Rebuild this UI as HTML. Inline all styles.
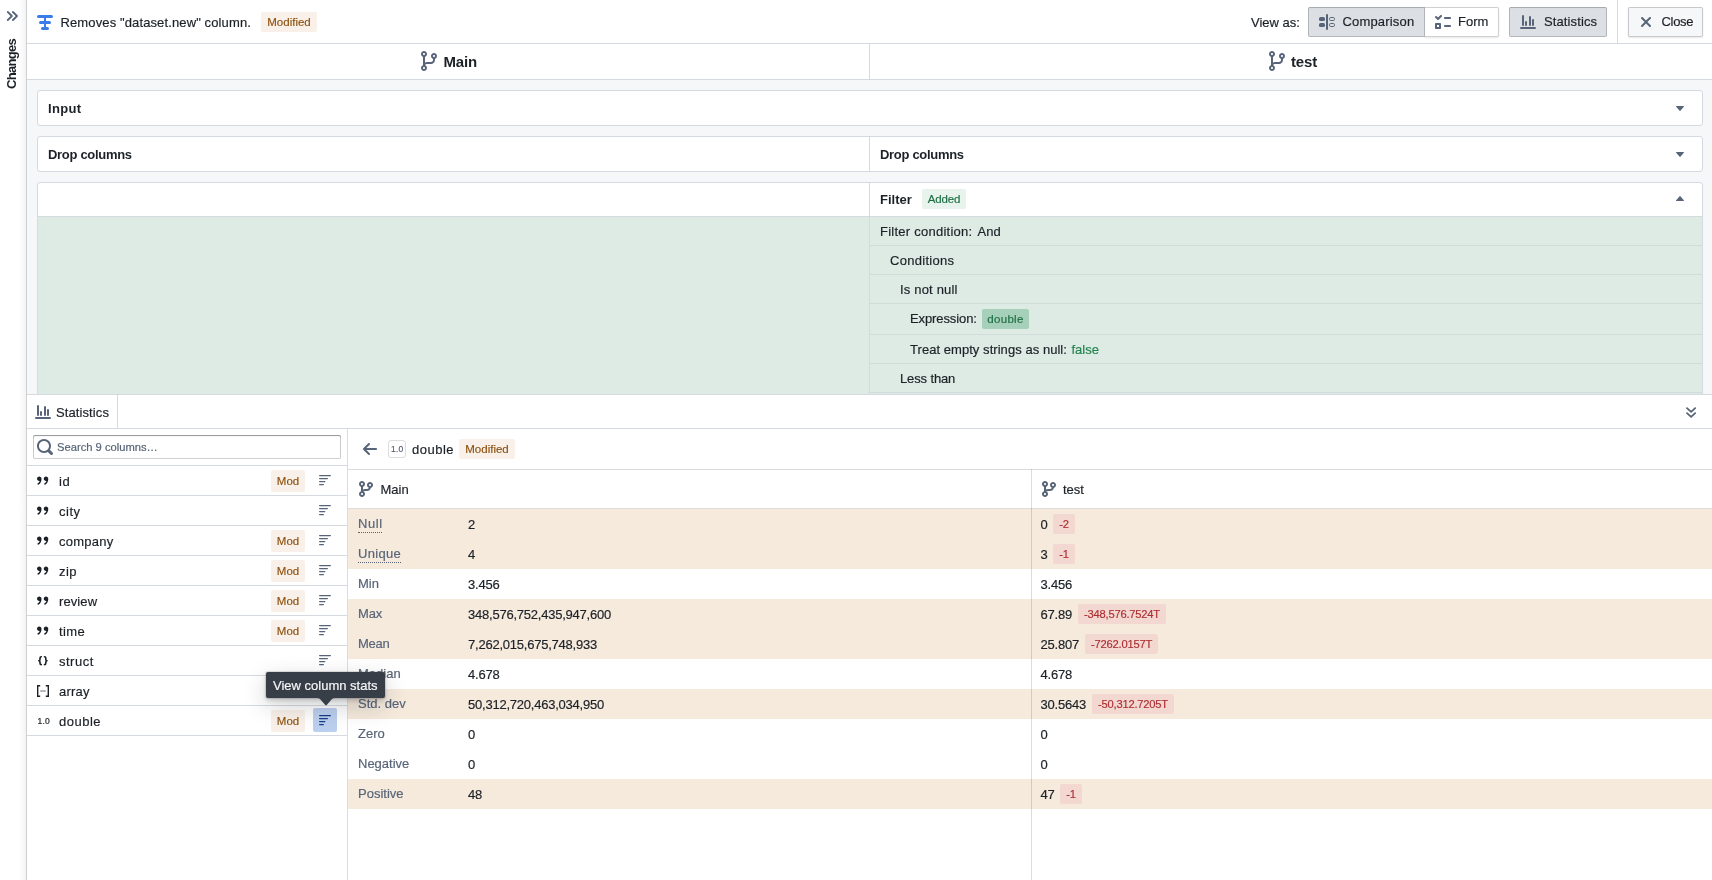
<!DOCTYPE html>
<html lang="en">
<head>
<meta charset="utf-8">
<title>Changes</title>
<style>
*{box-sizing:border-box;margin:0;padding:0}
html,body{width:1712px;height:880px;overflow:hidden;background:#fff}
body{font-family:"Liberation Sans",sans-serif;font-size:13px;color:#1c2127;-webkit-font-smoothing:antialiased}
#app{position:relative;width:1712px;height:880px;overflow:hidden;background:#fff;will-change:transform;transform:translateZ(0)}
.abs{position:absolute}
.t{position:absolute;white-space:nowrap;line-height:16px;height:16px;-webkit-text-stroke:.18px currentColor}
.b{font-weight:bold;-webkit-text-stroke:0 transparent}
svg{position:absolute;display:block;overflow:visible}
.ic{fill:#586578}
/* rail */
#rail{left:0;top:0;width:26px;height:880px;background:linear-gradient(to right,#fff 0,#fff 17px,#fcfcfc 21px,#f3f3f4 26px)}
#main{left:26px;top:0;width:1686px;height:880px;background:#f6f7f9;border-left:1px solid #cfd0d2}
#hdr{left:27px;top:0;width:1685px;height:44px;background:#fff;border-bottom:1px solid #d5d9e0}
#brow{left:27px;top:44px;width:1685px;height:36px;background:#fff;border-bottom:1px solid #d5d9e0}
.tag{position:absolute;border-radius:2px;height:20px;line-height:20px;font-size:11.5px;text-align:center;white-space:nowrap;-webkit-text-stroke:.15px currentColor}
.tag.mod{background:#f9f1e9;color:#8c500e}
.tag.add{background:#e9f3ee;color:#1c6e42}
.tag.red{background:#f3d7d1;color:#ac2f33;font-size:11.2px;letter-spacing:-.22px}
.btn{position:absolute;top:7px;height:30px;background:#f6f7f9;box-shadow:inset 0 0 0 1px rgba(17,20,24,.2),0 1px 2px rgba(17,20,24,.1);border-radius:2px}
.btn.on{background:#dce0e5;box-shadow:inset 0 0 0 1px rgba(17,20,24,.2),inset 0 1px 1px rgba(17,20,24,.08)}
.card{position:absolute;left:37px;width:1666px;background:#fff;border:1px solid #d5d9e0;border-radius:3px}
.vline{position:absolute;width:1px;background:#d5d9e0}
.hline{position:absolute;height:1px;background:#d5d9e0}
.hline.g{background:#d0dbda}
.hline.n,.vline.n{background:rgba(17,20,24,.15)}
.lab{color:#586578}
.lab.ul{border-bottom:1px dotted #586578;height:17px;overflow:hidden}
.num{letter-spacing:-.23px}
.tyi{color:#1c2127}
</style>
</head>
<body>
<div id="app">
  <!-- main background -->
  <div id="main" class="abs"></div>
  <div id="rail" class="abs"></div>

  <!-- header -->
  <div id="hdr" class="abs"></div>
  <div id="brow" class="abs"></div>

  <!-- rail content -->
  <svg style="left:0;top:0" width="26" height="32" viewBox="0 0 26 32" fill="none" stroke="#586578" stroke-width="1.800" stroke-linecap="round" stroke-linejoin="round"><path d="M7.800 12L11.900 16 7.800 20M12.900 12L17 16l-4.100 4"/></svg>
  <div id="chg" class="t b" style="left:16px;top:89.3px;font-size:13px;letter-spacing:-.7px;transform-origin:0 0;transform:rotate(-90deg) translateY(-12px)">Changes</div>

  <!-- header content -->
  <svg style="left:37px;top:14px" width="16" height="16" viewBox="0 0 16 16" fill="#3a7ce8"><rect x="0" y="1" width="16" height="3" rx="1.5"/><rect x="2" y="7" width="12" height="3" rx="1.5"/><rect x="4" y="13" width="8" height="3" rx="1.5"/><rect x="7" y="2" width="2" height="13"/></svg>
  <div id="title" class="t" style="left:60.5px;top:15px;letter-spacing:0.12px">Removes "dataset.new" column.</div>
  <div class="tag mod" style="left:261px;top:12px;width:56px"><span id="tmod1">Modified</span></div>

  <div id="viewas" class="t" style="left:1251px;top:15px">View as:</div>
  <div class="btn" style="left:1424px;width:75px;border-radius:0 2px 2px 0;background:#fff"></div>
  <div class="btn on" style="left:1308px;width:117px;border-radius:2px 0 0 2px"></div>
  <div class="btn on" style="left:1509px;width:98px"></div>
  <div class="btn" style="left:1628px;width:75px"></div>
  <div class="vline" style="left:1617px;top:0;height:43px"></div>

  <svg class="ic" style="left:1319px;top:14px" width="16" height="16" viewBox="0 0 16 16"><rect x="0" y="3" width="6" height="4" rx="1.6"/><rect x="0" y="9" width="6" height="4" rx="1.6"/><rect x="7" y="0" width="2" height="16" rx="1"/><rect x="10.5" y="3.5" width="5" height="3" rx="1.2" fill="none" stroke="#586578"/><rect x="10.5" y="9.5" width="5" height="3" rx="1.2" fill="none" stroke="#586578"/></svg>
  <div id="bcomp" class="t" style="left:1342.5px;top:14px;letter-spacing:0.17px">Comparison</div>
  <svg class="ic" style="left:1435px;top:14px" width="16" height="16" viewBox="0 0 16 16"><path fill-rule="evenodd" d="M2 11v2h2v-2H2zM1 9h4c.55 0 1 .45 1 1v4c0 .55-.45 1-1 1H1c-.55 0-1-.45-1-1v-4c0-.55.45-1 1-1zm9-6h5c.55 0 1 .45 1 1s-.45 1-1 1h-5c-.55 0-1-.45-1-1s.45-1 1-1zM6 1c.55 0 1 .45 1 1 0 .28-.11.53-.29.71l-3 3C3.530 5.890 3.280 6 3 6s-.53-.11-.71-.29l-2-2A1.003 1.003 0 011.710 2.290L3 3.590 5.290 1.300C5.470 1.110 5.720 1 6 1zm4 10h5c.55 0 1 .45 1 1s-.45 1-1 1h-5c-.55 0-1-.45-1-1s.45-1 1-1z"/></svg>
  <div id="bform" class="t" style="left:1458px;top:14px">Form</div>
  <svg class="ic" style="left:1520px;top:14px" width="16" height="16" viewBox="0 0 16 16"><rect x="0" y="13" width="16" height="2" rx="1"/><rect x="2" y="1" width="2" height="11" rx="1"/><rect x="5" y="7" width="2" height="5" rx="1"/><rect x="9" y="2" width="2" height="10" rx="1"/><rect x="12" y="5" width="2" height="7" rx="1"/></svg>
  <div id="bstat" class="t" style="left:1544px;top:14px;letter-spacing:0.12px">Statistics</div>
  <svg class="ic" style="left:1638px;top:14px" width="16" height="16" viewBox="0 0 16 16"><path d="M9.41 8l3.29-3.29c.19-.18.3-.43.3-.71a1.003 1.003 0 00-1.710-.71L8 6.590l-3.290-3.300a1.003 1.003 0 00-1.420 1.420L6.590 8 3.300 11.290c-.19.18-.3.43-.3.71a1.003 1.003 0 001.710.71L8 9.410l3.290 3.290c.18.19.43.3.71.3a1.003 1.003 0 00.71-1.710L9.410 8z"/></svg>
  <div id="bclose" class="t" style="left:1661.5px;top:14px;letter-spacing:-0.3px">Close</div>

  <!-- branch row -->
  <div class="vline" style="left:869px;top:44px;height:35px"></div>
  <svg class="ic" style="left:419px;top:51px" width="20" height="20" viewBox="0 0 20 20"><path fill-rule="evenodd" d="M15 2c-1.660 0-3 1.340-3 3 0 1.300.84 2.400 2 2.820V9c0 1.100-.9 2-2 2H8c-.73 0-1.410.21-2 .55V5.820C7.160 5.400 8 4.300 8 3c0-1.660-1.340-3-3-3S2 1.340 2 3c0 1.300.84 2.400 2 2.820v8.370C2.840 14.600 2 15.700 2 17c0 1.660 1.340 3 3 3s3-1.340 3-3c0-1.250-.77-2.300-1.850-2.750C6.450 13.520 7.160 13 8 13h4c2.210 0 4-1.790 4-4V7.820C17.160 7.400 18 6.300 18 5c0-1.660-1.340-3-3-3zM5 2c.55 0 1 .45 1 1s-.45 1-1 1-1-.45-1-1 .45-1 1-1zm0 16c-.55 0-1-.45-1-1s.45-1 1-1 1 .45 1 1-.45 1-1 1zM15 6c-.55 0-1-.45-1-1s.45-1 1-1 1 .45 1 1-.45 1-1 1z"/></svg>
  <div id="hmain" class="t b" style="left:443.5px;top:53px;font-size:15px;line-height:18px;height:18px;letter-spacing:-0.2px">Main</div>
  <svg class="ic" style="left:1267px;top:51px" width="20" height="20" viewBox="0 0 20 20"><path fill-rule="evenodd" d="M15 2c-1.660 0-3 1.340-3 3 0 1.300.84 2.400 2 2.820V9c0 1.100-.9 2-2 2H8c-.73 0-1.410.21-2 .55V5.820C7.160 5.400 8 4.300 8 3c0-1.660-1.340-3-3-3S2 1.340 2 3c0 1.300.84 2.400 2 2.820v8.370C2.840 14.600 2 15.700 2 17c0 1.660 1.340 3 3 3s3-1.340 3-3c0-1.250-.77-2.300-1.850-2.750C6.450 13.520 7.160 13 8 13h4c2.210 0 4-1.790 4-4V7.820C17.160 7.400 18 6.300 18 5c0-1.660-1.340-3-3-3zM5 2c.55 0 1 .45 1 1s-.45 1-1 1-1-.45-1-1 .45-1 1-1zm0 16c-.55 0-1-.45-1-1s.45-1 1-1 1 .45 1 1-.45 1-1 1zM15 6c-.55 0-1-.45-1-1s.45-1 1-1 1 .45 1 1-.45 1-1 1z"/></svg>
  <div id="htest" class="t b" style="left:1291px;top:53px;font-size:15px;line-height:18px;height:18px;letter-spacing:-0.15px">test</div>
  <!-- /PART1 -->
  <!-- cards -->
  <div class="card" style="top:90px;height:36px"></div>
  <div id="cinput" class="t b" style="left:48px;top:101px;letter-spacing:0.3px">Input</div>
  <svg class="ic" style="left:1672px;top:100px" width="16" height="16" viewBox="0 0 16 16"><path d="M12 6.500c0-.28-.22-.5-.5-.5h-7a.495.495 0 00-.37.83l3.500 4c.9.1.22.17.37.17s.28-.7.37-.17l3.500-4c.08-.9.13-.2.13-.33z"/></svg>

  <div class="card" style="top:136px;height:36px"></div>
  <div class="vline" style="left:869px;top:137px;height:34px"></div>
  <div id="cdrop1" class="t b" style="left:48px;top:147px;letter-spacing:-0.3px">Drop columns</div>
  <div id="cdrop2" class="t b" style="left:880px;top:147px;letter-spacing:-0.3px">Drop columns</div>
  <svg class="ic" style="left:1672px;top:146px" width="16" height="16" viewBox="0 0 16 16"><path d="M12 6.500c0-.28-.22-.5-.5-.5h-7a.495.495 0 00-.37.83l3.500 4c.9.1.22.17.37.17s.28-.7.37-.17l3.500-4c.08-.9.13-.2.13-.33z"/></svg>

  <div class="card" style="top:182px;height:230px;border-radius:3px 3px 0 0"></div>
  <div class="abs" style="left:38px;top:217px;width:1664px;height:177px;background:#deebe4"></div>
  <div class="vline" style="left:869px;top:183px;height:211px"></div>
  <div class="hline" style="left:38px;top:216px;width:1664px"></div>
  <div id="cfilter" class="t b" style="left:880px;top:192px">Filter</div>
  <div class="tag add" style="left:922px;top:189px;width:44px"><span id="tadd" style="letter-spacing:-0.2px">Added</span></div>
  <svg class="ic" style="left:1672px;top:191px" width="16" height="16" viewBox="0 0 16 16"><path d="M11.870 9.170s.01 0 0 0l-3.500-4C8.280 5.070 8.150 5 8 5s-.28.07-.37.17l-3.500 4a.495.495 0 00.37.83h7c.28 0 .5-.22.5-.5 0-.13-.05-.24-.13-.33z"/></svg>

  <div class="hline g" style="left:870px;top:245px;width:832px"></div>
  <div class="hline g" style="left:870px;top:274px;width:832px"></div>
  <div class="hline g" style="left:870px;top:303px;width:832px"></div>
  <div class="hline g" style="left:870px;top:334px;width:832px"></div>
  <div class="hline g" style="left:870px;top:363px;width:832px"></div>
  <div class="hline g" style="left:870px;top:392px;width:832px"></div>

  <div id="f1" class="t" style="left:880px;top:224px;letter-spacing:0.25px">Filter condition:</div>
  <div id="f1v" class="t" style="left:977.5px;top:224px">And</div>
  <div id="f2" class="t" style="left:890px;top:253px;letter-spacing:0.29px">Conditions</div>
  <div id="f3" class="t" style="left:900px;top:282px;letter-spacing:0.18px">Is not null</div>
  <div id="f4" class="t" style="left:910px;top:311px;letter-spacing:-0.1px">Expression:</div>
  <div class="tag" style="left:982px;top:309px;width:47px;background:#a7d0ba;color:#1c6e42"><span id="tdbl" style="letter-spacing:0.3px">double</span></div>
  <div id="f5" class="t" style="left:910px;top:342px;letter-spacing:0.05px">Treat empty strings as null:</div>
  <div id="f5v" class="t" style="left:1071.5px;top:342px;color:#238551">false</div>
  <div id="f6" class="t" style="left:900px;top:371px;letter-spacing:-0.13px">Less than</div>
  <!-- /PART2 -->
  <!-- statistics panel -->
  <div class="abs" style="left:27px;top:394px;width:1685px;height:486px;background:#fff;border-top:1px solid #d5d9e0"></div>
  <div class="hline" style="left:27px;top:428px;width:1685px"></div>
  <div class="vline" style="left:117px;top:395px;height:33px"></div>
  <svg class="ic" style="left:35px;top:404px" width="16" height="16" viewBox="0 0 16 16"><rect x="0" y="13" width="16" height="2" rx="1"/><rect x="2" y="1" width="2" height="11" rx="1"/><rect x="5" y="7" width="2" height="5" rx="1"/><rect x="9" y="2" width="2" height="10" rx="1"/><rect x="12" y="5" width="2" height="7" rx="1"/></svg>
  <div id="stab" class="t" style="left:56px;top:405px;letter-spacing:0.1px">Statistics</div>
  <svg style="left:1680px;top:400px" width="24" height="24" viewBox="0 0 24 24" fill="none" stroke="#586578" stroke-width="1.800" stroke-linecap="round" stroke-linejoin="round"><path d="M7 8.200L11.100 11.900 15.200 8.200M7 13.200L11.100 16.900 15.200 13.200"/></svg>
  <div class="vline n" style="left:347px;top:429px;height:451px"></div>
  <div class="abs" style="left:33px;top:435px;width:308px;height:24px;border-radius:2px;background:#fff;box-shadow:inset 0 0 0 1px rgba(17,20,24,.2),inset 0 1px 1px rgba(17,20,24,.3)"></div>
  <svg class="ic" style="left:37px;top:439px" width="16" height="16" viewBox="0 0 16 16"><path d="M15.550 13.430l-2.670-2.680a6.940 6.940 0 001.110-3.760c0-3.870-3.130-7-7-7s-7 3.130-7 7 3.130 7 7 7c1.390 0 2.680-.42 3.760-1.110l2.680 2.670a1.498 1.498 0 102.120-2.120zm-8.560-1.440c-2.760 0-5-2.240-5-5s2.240-5 5-5 5 2.240 5 5-2.240 5-5 5z"/></svg>
  <div id="sph" class="t" style="left:57px;top:439px;font-size:11.2px;color:#566375">Search 9 columns…</div>
  <div class="hline" style="left:27px;top:465px;width:320px"></div>
  <div class="hline" style="left:27px;top:495px;width:320px"></div>
  <svg style="left:37px;top:474.5px" width="12" height="12" viewBox="0 0 16 16" fill="#1c2127"><path d="M15.020 5c0-1.660-1.340-3-3-3s-3 1.340-3 3 1.340 3 3 3c.2 0 .38-.2.570-.06-.5 1.350-1.420 2.520-2.570 3.170-.49.3-.52.860-.39 1.270.14.400.54.620 1.030.62 1.450 0 4.370-3.140 4.370-7.590 0-.07-.01-.27-.01-.41zm-9 0c0-1.660-1.340-3-3-3s-3 1.340-3 3 1.340 3 3 3c.2 0 .38-.2.570-.06-.5 1.350-1.420 2.520-2.570 3.170-.49.3-.52.860-.39 1.270.14.400.54.620 1.030.62 1.450 0 4.370-3.140 4.370-7.590 0-.07-.01-.27-.01-.41z"/></svg>
  <div id="c0" class="t" style="left:59px;top:474px;letter-spacing:0.5px">id</div>
  <div class="tag mod" style="left:271px;top:470px;width:34px;height:22px;line-height:22px"><span id="m0">Mod</span></div>
  <svg class="ic" style="left:319px;top:475px" width="12" height="11" viewBox="0 0 12 11"><rect x="0" y="0" width="12" height="1.200" rx=".6"/><rect x="0" y="3" width="9" height="1.200" rx=".6"/><rect x="0" y="6" width="6.400" height="1.200" rx=".6"/><rect x="0" y="9" width="5" height="1.200" rx=".6"/></svg>
  <div class="hline" style="left:27px;top:525px;width:320px"></div>
  <svg style="left:37px;top:504.5px" width="12" height="12" viewBox="0 0 16 16" fill="#1c2127"><path d="M15.020 5c0-1.660-1.340-3-3-3s-3 1.340-3 3 1.340 3 3 3c.2 0 .38-.2.570-.06-.5 1.350-1.420 2.520-2.570 3.170-.49.3-.52.860-.39 1.270.14.400.54.620 1.030.62 1.450 0 4.370-3.140 4.370-7.590 0-.07-.01-.27-.01-.41zm-9 0c0-1.660-1.340-3-3-3s-3 1.340-3 3 1.340 3 3 3c.2 0 .38-.2.570-.06-.5 1.350-1.420 2.520-2.570 3.170-.49.3-.52.860-.39 1.270.14.400.54.620 1.030.62 1.450 0 4.370-3.140 4.370-7.590 0-.07-.01-.27-.01-.41z"/></svg>
  <div id="c1" class="t" style="left:59px;top:504px;letter-spacing:0.5px">city</div>
  <svg class="ic" style="left:319px;top:505px" width="12" height="11" viewBox="0 0 12 11"><rect x="0" y="0" width="12" height="1.200" rx=".6"/><rect x="0" y="3" width="9" height="1.200" rx=".6"/><rect x="0" y="6" width="6.400" height="1.200" rx=".6"/><rect x="0" y="9" width="5" height="1.200" rx=".6"/></svg>
  <div class="hline" style="left:27px;top:555px;width:320px"></div>
  <svg style="left:37px;top:534.5px" width="12" height="12" viewBox="0 0 16 16" fill="#1c2127"><path d="M15.020 5c0-1.660-1.340-3-3-3s-3 1.340-3 3 1.340 3 3 3c.2 0 .38-.2.570-.06-.5 1.350-1.420 2.520-2.570 3.170-.49.3-.52.860-.39 1.270.14.400.54.620 1.030.62 1.450 0 4.370-3.140 4.370-7.590 0-.07-.01-.27-.01-.41zm-9 0c0-1.660-1.340-3-3-3s-3 1.340-3 3 1.340 3 3 3c.2 0 .38-.2.570-.06-.5 1.350-1.420 2.520-2.570 3.170-.49.3-.52.860-.39 1.270.14.400.54.620 1.030.62 1.450 0 4.370-3.140 4.370-7.590 0-.07-.01-.27-.01-.41z"/></svg>
  <div id="c2" class="t" style="left:59px;top:534px;letter-spacing:.25px">company</div>
  <div class="tag mod" style="left:271px;top:530px;width:34px;height:22px;line-height:22px"><span id="m2">Mod</span></div>
  <svg class="ic" style="left:319px;top:535px" width="12" height="11" viewBox="0 0 12 11"><rect x="0" y="0" width="12" height="1.200" rx=".6"/><rect x="0" y="3" width="9" height="1.200" rx=".6"/><rect x="0" y="6" width="6.400" height="1.200" rx=".6"/><rect x="0" y="9" width="5" height="1.200" rx=".6"/></svg>
  <div class="hline" style="left:27px;top:585px;width:320px"></div>
  <svg style="left:37px;top:564.5px" width="12" height="12" viewBox="0 0 16 16" fill="#1c2127"><path d="M15.020 5c0-1.660-1.340-3-3-3s-3 1.340-3 3 1.340 3 3 3c.2 0 .38-.2.570-.06-.5 1.350-1.420 2.520-2.570 3.170-.49.3-.52.860-.39 1.270.14.400.54.620 1.030.62 1.450 0 4.370-3.140 4.370-7.590 0-.07-.01-.27-.01-.41zm-9 0c0-1.660-1.340-3-3-3s-3 1.340-3 3 1.340 3 3 3c.2 0 .38-.2.570-.06-.5 1.350-1.420 2.520-2.570 3.170-.49.3-.52.860-.39 1.270.14.400.54.620 1.030.62 1.450 0 4.370-3.140 4.370-7.590 0-.07-.01-.27-.01-.41z"/></svg>
  <div id="c3" class="t" style="left:59px;top:564px;letter-spacing:0.4px">zip</div>
  <div class="tag mod" style="left:271px;top:560px;width:34px;height:22px;line-height:22px"><span id="m3">Mod</span></div>
  <svg class="ic" style="left:319px;top:565px" width="12" height="11" viewBox="0 0 12 11"><rect x="0" y="0" width="12" height="1.200" rx=".6"/><rect x="0" y="3" width="9" height="1.200" rx=".6"/><rect x="0" y="6" width="6.400" height="1.200" rx=".6"/><rect x="0" y="9" width="5" height="1.200" rx=".6"/></svg>
  <div class="hline" style="left:27px;top:615px;width:320px"></div>
  <svg style="left:37px;top:594.5px" width="12" height="12" viewBox="0 0 16 16" fill="#1c2127"><path d="M15.020 5c0-1.660-1.340-3-3-3s-3 1.340-3 3 1.340 3 3 3c.2 0 .38-.2.570-.06-.5 1.350-1.420 2.520-2.570 3.170-.49.3-.52.860-.39 1.270.14.400.54.620 1.030.62 1.450 0 4.370-3.140 4.370-7.590 0-.07-.01-.27-.01-.41zm-9 0c0-1.660-1.340-3-3-3s-3 1.340-3 3 1.340 3 3 3c.2 0 .38-.2.570-.06-.5 1.350-1.420 2.520-2.570 3.170-.49.3-.52.860-.39 1.270.14.400.54.620 1.030.62 1.450 0 4.370-3.140 4.370-7.590 0-.07-.01-.27-.01-.41z"/></svg>
  <div id="c4" class="t" style="left:59px;top:594px;letter-spacing:.1px">review</div>
  <div class="tag mod" style="left:271px;top:590px;width:34px;height:22px;line-height:22px"><span id="m4">Mod</span></div>
  <svg class="ic" style="left:319px;top:595px" width="12" height="11" viewBox="0 0 12 11"><rect x="0" y="0" width="12" height="1.200" rx=".6"/><rect x="0" y="3" width="9" height="1.200" rx=".6"/><rect x="0" y="6" width="6.400" height="1.200" rx=".6"/><rect x="0" y="9" width="5" height="1.200" rx=".6"/></svg>
  <div class="hline" style="left:27px;top:645px;width:320px"></div>
  <svg style="left:37px;top:624.5px" width="12" height="12" viewBox="0 0 16 16" fill="#1c2127"><path d="M15.020 5c0-1.660-1.340-3-3-3s-3 1.340-3 3 1.340 3 3 3c.2 0 .38-.2.570-.06-.5 1.350-1.420 2.520-2.570 3.170-.49.3-.52.860-.39 1.270.14.400.54.620 1.030.62 1.450 0 4.370-3.140 4.370-7.590 0-.07-.01-.27-.01-.41zm-9 0c0-1.660-1.340-3-3-3s-3 1.340-3 3 1.340 3 3 3c.2 0 .38-.2.570-.06-.5 1.350-1.420 2.520-2.570 3.170-.49.3-.52.860-.39 1.270.14.400.54.620 1.030.62 1.450 0 4.370-3.140 4.370-7.590 0-.07-.01-.27-.01-.41z"/></svg>
  <div id="c5" class="t" style="left:59px;top:624px;letter-spacing:0.4px">time</div>
  <div class="tag mod" style="left:271px;top:620px;width:34px;height:22px;line-height:22px"><span id="m5">Mod</span></div>
  <svg class="ic" style="left:319px;top:625px" width="12" height="11" viewBox="0 0 12 11"><rect x="0" y="0" width="12" height="1.200" rx=".6"/><rect x="0" y="3" width="9" height="1.200" rx=".6"/><rect x="0" y="6" width="6.400" height="1.200" rx=".6"/><rect x="0" y="9" width="5" height="1.200" rx=".6"/></svg>
  <div class="hline" style="left:27px;top:675px;width:320px"></div>
  <svg style="left:38px;top:656px" width="10" height="10" viewBox="0 0 10 10" fill="none" stroke="#1c2127" stroke-width="1.600" stroke-linecap="round" stroke-linejoin="round"><path d="M3.300 .8C2.300 .8 2 1.300 2 2.200v1.300c0 .8-.4 1.200-1.200 1.200.8 0 1.200.4 1.200 1.200v1.300c0 .9.300 1.400 1.300 1.400"/><path d="M6.500 .8c1 0 1.300.5 1.300 1.400v1.300c0 .8.4 1.200 1.200 1.200-.8 0-1.200.4-1.200 1.200v1.300c0 .9-.3 1.400-1.300 1.400"/></svg>
  <div id="c6" class="t" style="left:59px;top:654px;letter-spacing:0.5px">struct</div>
  <svg class="ic" style="left:319px;top:655px" width="12" height="11" viewBox="0 0 12 11"><rect x="0" y="0" width="12" height="1.200" rx=".6"/><rect x="0" y="3" width="9" height="1.200" rx=".6"/><rect x="0" y="6" width="6.400" height="1.200" rx=".6"/><rect x="0" y="9" width="5" height="1.200" rx=".6"/></svg>
  <div class="hline" style="left:27px;top:705px;width:320px"></div>
  <svg style="left:37px;top:685px" width="12" height="12" viewBox="0 0 12 12" fill="none" stroke="#1c2127" stroke-width="1.400"><path d="M3.200 .7H.7v10.600h2.500M8.800 .7h2.500v10.600H8.800"/><g fill="#39414b" stroke="none"><circle cx="4.100" cy="6" r=".65"/><circle cx="6" cy="6" r=".65"/><circle cx="7.900" cy="6" r=".65"/></g></svg>
  <div id="c7" class="t" style="left:59px;top:684px;letter-spacing:0.2px">array</div>
  <svg class="ic" style="left:319px;top:685px" width="12" height="11" viewBox="0 0 12 11"><rect x="0" y="0" width="12" height="1.200" rx=".6"/><rect x="0" y="3" width="9" height="1.200" rx=".6"/><rect x="0" y="6" width="6.400" height="1.200" rx=".6"/><rect x="0" y="9" width="5" height="1.200" rx=".6"/></svg>
  <div class="hline" style="left:27px;top:735px;width:320px"></div>
  <div class="t tyi" style="left:37.5px;top:713px;font-size:8.5px;letter-spacing:.25px;-webkit-text-stroke:.2px #1c2127">1.0</div>
  <div id="c8" class="t" style="left:59px;top:714px;letter-spacing:0.5px">double</div>
  <div class="tag mod" style="left:271px;top:710px;width:34px;height:22px;line-height:22px"><span id="m8">Mod</span></div>
  <div class="abs" style="left:313px;top:708px;width:24px;height:24px;border-radius:2px;background:#bccfee"></div>
  <svg style="left:319px;top:715px" width="12" height="11" viewBox="0 0 12 11" fill="#163f88"><rect x="0" y="0" width="12" height="1.200" rx=".6"/><rect x="0" y="3" width="9" height="1.200" rx=".6"/><rect x="0" y="6" width="6.400" height="1.200" rx=".6"/><rect x="0" y="9" width="5" height="1.200" rx=".6"/></svg>
  <div class="hline n" style="left:348px;top:469px;width:1364px"></div>
  <div class="hline n" style="left:348px;top:508px;width:1364px"></div>
  <svg class="ic" style="left:362px;top:441px" width="16" height="16" viewBox="0 0 16 16"><path d="M13.990 6.990H4.410L7.700 3.700a1.003 1.003 0 00-1.420-1.420l-5 5a1.014 1.014 0 000 1.420l5 5a1.003 1.003 0 001.420-1.420L4.410 8.990H14c.55 0 1-.45 1-1s-.46-1-1.010-1z"/></svg>
  <div class="abs" style="left:388px;top:440px;width:18px;height:18px;border:1px solid #dcdcdd;border-radius:3px;background:#fff"></div>
  <div id="ty10" class="t" style="left:391px;top:441px;font-size:8.5px;color:#4f5b6d;letter-spacing:.25px;-webkit-text-stroke:.15px #4f5b6d">1.0</div>
  <div id="dname" class="t" style="left:412px;top:442px;letter-spacing:0.5px">double</div>
  <div class="tag mod" style="left:459px;top:439px;width:56px"><span id="tmod2">Modified</span></div>
  <svg class="ic" style="left:358px;top:481px" width="16" height="16" viewBox="0 0 16 16"><path fill-rule="evenodd" d="M12 1c-1.660 0-3 1.340-3 3 0 1.250.76 2.320 1.850 2.770A2.020 2.020 0 019 8H7c-.73 0-1.410.2-2 .55V5.820C6.160 5.400 7 4.300 7 3c0-1.660-1.340-3-3-3S1 1.340 1 3c0 1.300.84 2.400 2 2.820v4.370c-1.160.4-2 1.510-2 2.810 0 1.660 1.340 3 3 3s3-1.340 3-3c0-1.250-.77-2.300-1.850-2.750C5.450 10.520 6.160 10 7 10h2c1.860 0 3.400-1.280 3.850-3H13v-.18c1.160-.41 2-1.510 2-2.820 0-1.660-1.340-3-3-3zM4 2c.55 0 1 .45 1 1s-.45 1-1 1-1-.45-1-1 .45-1 1-1zm0 12c-.55 0-1-.45-1-1s.45-1 1-1 1 .45 1 1-.45 1-1 1zm8-9c-.55 0-1-.45-1-1s.45-1 1-1 1 .45 1 1-.45 1-1 1z"/></svg>
  <div id="smain" class="t" style="left:380.500px;top:482px">Main</div>
  <svg class="ic" style="left:1041px;top:481px" width="16" height="16" viewBox="0 0 16 16"><path fill-rule="evenodd" d="M12 1c-1.660 0-3 1.340-3 3 0 1.250.76 2.320 1.850 2.770A2.020 2.020 0 019 8H7c-.73 0-1.410.2-2 .55V5.820C6.160 5.400 7 4.300 7 3c0-1.660-1.340-3-3-3S1 1.340 1 3c0 1.300.84 2.400 2 2.820v4.370c-1.160.4-2 1.510-2 2.810 0 1.660 1.340 3 3 3s3-1.340 3-3c0-1.250-.77-2.300-1.850-2.750C5.450 10.520 6.160 10 7 10h2c1.860 0 3.400-1.280 3.850-3H13v-.18c1.160-.41 2-1.510 2-2.820 0-1.660-1.340-3-3-3zM4 2c.55 0 1 .45 1 1s-.45 1-1 1-1-.45-1-1 .45-1 1-1zm0 12c-.55 0-1-.45-1-1s.45-1 1-1 1 .45 1 1-.45 1-1 1zm8-9c-.55 0-1-.45-1-1s.45-1 1-1 1 .45 1 1-.45 1-1 1z"/></svg>
  <div id="stest" class="t" style="left:1063px;top:482px">test</div>
  <div class="abs" style="left:348px;top:509px;width:1364px;height:30px;background:#f6eadd"></div>
  <div id="l0" class="t lab ul" style="width:24px;left:358px;top:516px;letter-spacing:0.6px">Null</div>
  <div id="v0" class="t num" style="left:468px;top:517px">2</div>
  <div id="w0" class="t num" style="left:1040.500px;top:517px">0</div>
  <div id="dt0" class="tag red" style="left:1053px;top:514px;width:22px"><span id="d0">-2</span></div>
  <div class="abs" style="left:348px;top:539px;width:1364px;height:30px;background:#f6eadd"></div>
  <div id="l1" class="t lab ul" style="width:42.5px;left:358px;top:546px;letter-spacing:0.3px">Unique</div>
  <div id="v1" class="t num" style="left:468px;top:547px">4</div>
  <div id="w1" class="t num" style="left:1040.500px;top:547px">3</div>
  <div id="dt1" class="tag red" style="left:1053px;top:544px;width:22px"><span id="d1">-1</span></div>
  <div id="l2" class="t lab" style="left:358px;top:576px">Min</div>
  <div id="v2" class="t num" style="left:468px;top:577px">3.456</div>
  <div id="w2" class="t num" style="left:1040.500px;top:577px">3.456</div>
  <div class="abs" style="left:348px;top:599px;width:1364px;height:30px;background:#f6eadd"></div>
  <div id="l3" class="t lab" style="left:358px;top:606px;letter-spacing:-0.2px">Max</div>
  <div id="v3" class="t num" style="left:468px;top:607px">348,576,752,435,947,600</div>
  <div id="w3" class="t num" style="left:1040.500px;top:607px">67.89</div>
  <div id="dt3" class="tag red" style="left:1078px;top:604px;width:88px"><span id="d3">-348,576.7524T</span></div>
  <div class="abs" style="left:348px;top:629px;width:1364px;height:30px;background:#f6eadd"></div>
  <div id="l4" class="t lab" style="left:358px;top:636px;letter-spacing:-0.25px">Mean</div>
  <div id="v4" class="t num" style="left:468px;top:637px">7,262,015,675,748,933</div>
  <div id="w4" class="t num" style="left:1040.500px;top:637px">25.807</div>
  <div id="dt4" class="tag red" style="left:1085px;top:634px;width:73px"><span id="d4">-7262.0157T</span></div>
  <div id="l5" class="t lab" style="left:358px;top:666px">Median</div>
  <div id="v5" class="t num" style="left:468px;top:667px">4.678</div>
  <div id="w5" class="t num" style="left:1040.500px;top:667px">4.678</div>
  <div class="abs" style="left:348px;top:689px;width:1364px;height:30px;background:#f6eadd"></div>
  <div id="l6" class="t lab" style="left:358px;top:696px">Std. dev</div>
  <div id="v6" class="t num" style="left:468px;top:697px">50,312,720,463,034,950</div>
  <div id="w6" class="t num" style="left:1040.500px;top:697px">30.5643</div>
  <div id="dt6" class="tag red" style="left:1092px;top:694px;width:82px"><span id="d6">-50,312.7205T</span></div>
  <div id="l7" class="t lab" style="left:358px;top:726px">Zero</div>
  <div id="v7" class="t num" style="left:468px;top:727px">0</div>
  <div id="w7" class="t num" style="left:1040.500px;top:727px">0</div>
  <div id="l8" class="t lab" style="left:358px;top:756px">Negative</div>
  <div id="v8" class="t num" style="left:468px;top:757px">0</div>
  <div id="w8" class="t num" style="left:1040.500px;top:757px">0</div>
  <div class="abs" style="left:348px;top:779px;width:1364px;height:30px;background:#f6eadd"></div>
  <div id="l9" class="t lab" style="left:358px;top:786px">Positive</div>
  <div id="v9" class="t num" style="left:468px;top:787px">48</div>
  <div id="w9" class="t num" style="left:1040.500px;top:787px">47</div>
  <div id="dt9" class="tag red" style="left:1060px;top:784px;width:22px"><span id="d9">-1</span></div>
  <div class="vline n" style="left:1031px;top:469px;height:411px"></div>
  <div class="abs" style="left:266px;top:672px;width:119px;height:26px;border-radius:2px;background:#383e47;box-shadow:0 0 0 1px rgba(17,20,24,.1),0 2px 4px rgba(17,20,24,.2),0 8px 24px rgba(17,20,24,.2)"></div>
  <svg style="left:317px;top:697.500px" width="18" height="9" viewBox="0 0 18 9" fill="#383e47"><path d="M0 0H18C15.500 .3 14.800 1.200 13.900 2.200L10 6.700Q9 7.700 8 6.700L4.100 2.200C3.200 1.200 2.500 .3 0 0z"/></svg>
  <div id="tip" class="t" style="left:273px;top:678px;color:#f6f7f9">View column stats</div>
  <!-- /PART3 -->
  <!-- SECTIONS -->
</div>
</body>
</html>
